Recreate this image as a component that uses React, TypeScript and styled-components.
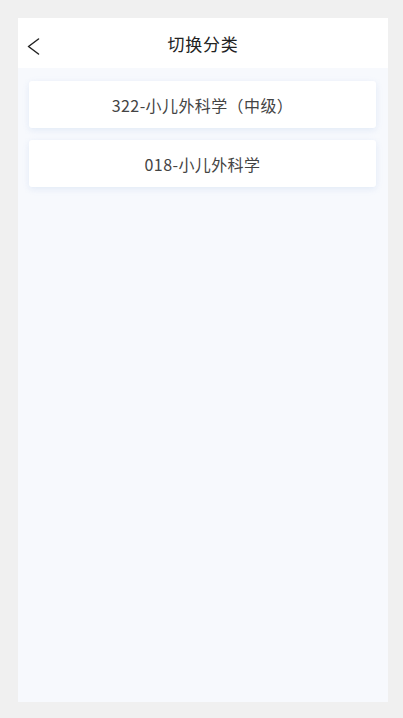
import React from "react";
import styled, { createGlobalStyle } from "styled-components";

const Global = createGlobalStyle`
  html, body { margin: 0; padding: 0; background: #f0f0f0; }
  body { font-family: "Noto Sans CJK SC", "Noto Sans", sans-serif; }
`;

const Page = styled.div`
  padding: 18px 15px 16px 18px;
  box-sizing: border-box;
  height: 718px;
  display: flex;
`;

const Panel = styled.div`
  flex: 1;
  background: #f7f9fd;
  display: flex;
  flex-direction: column;
`;

const Header = styled.div`
  height: 50px;
  background: #ffffff;
  display: flex;
  align-items: center;
  justify-content: center;
  position: relative;
`;

const Back = styled.button`
  position: absolute;
  left: 8px;
  top: calc(50% + 3px);
  transform: translateY(-50%);
  border: none;
  background: transparent;
  padding: 0;
  width: 14px;
  height: 18px;
  display: flex;
  align-items: center;
  justify-content: center;
`;

const Title = styled.div`
  font-size: 17px;
  color: #222222;
  letter-spacing: 0.8px;
`;

const List = styled.div`
  display: flex;
  flex-direction: column;
  gap: 12px;
  padding: 13px 12px 0 11px;
`;

const Card = styled.div`
  height: 47px;
  background: #ffffff;
  border-radius: 3px;
  box-shadow: 0 2px 6px rgba(200, 215, 240, 0.45);
  display: flex;
  align-items: center;
  justify-content: center;
  font-size: 16px;
  color: #444444;
  letter-spacing: 0.4px;
`;

const items = ["322-小儿外科学（中级）", "018-小儿外科学"];

export default function App() {
  return (
    <>
      <Global />
      <Page>
        <Panel>
          <Header>
            <Back aria-label="back">
              <svg width="13" height="17" viewBox="0 0 13 17" fill="none">
                <path d="M11.5 1 L1.5 8.5 L11.5 16" stroke="#222" strokeWidth="1.5" strokeLinecap="round" strokeLinejoin="round" />
              </svg>
            </Back>
            <Title>切换分类</Title>
          </Header>
          <List>
            {items.map((t) => (
              <Card key={t}>{t}</Card>
            ))}
          </List>
        </Panel>
      </Page>
    </>
  );
}
